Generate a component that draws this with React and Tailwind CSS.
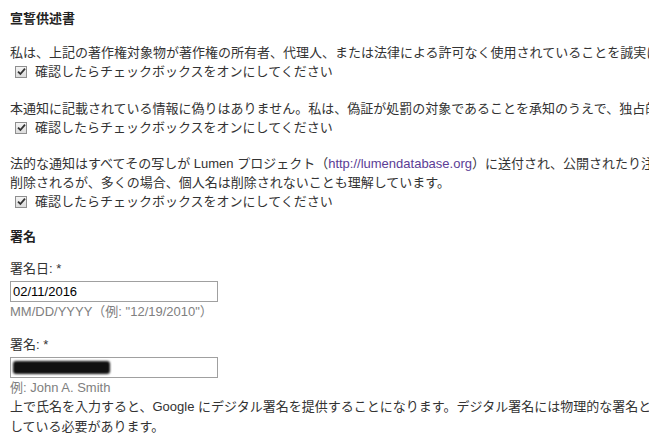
import React from 'react';

const font = { fontFamily: '"Liberation Sans", Arial, "Noto Sans CJK JP", sans-serif' };

const Check = () => (
  <label className="flex items-center h-[19px]">
    <span className="ml-[5px] mr-[8px] w-[12px] h-[12px] border border-[#8f8f8f] bg-gradient-to-b from-[#f4f4f4] to-[#dcdcdc] flex items-center justify-center">
      <svg width="9" height="9" viewBox="0 0 9 9">
        <path d="M1 4.6 L3.4 7 L8 1.6" fill="none" stroke="#333" strokeWidth="1.8" />
      </svg>
    </span>
    <span>確認したらチェックボックスをオンにしてください</span>
  </label>
);

const TextField = ({ children }) => (
  <div className="mt-[3px] w-[208px] h-[21px] border border-[#a0a0a0] bg-white flex items-center px-[2px] text-black">
    {children}
  </div>
);

export default function App() {
  return (
    <div className="w-[649px] h-[445px] overflow-hidden bg-white text-[13px] leading-[19px] text-[#333] whitespace-nowrap" style={font}>
      <div className="pl-[10px] pt-[9px]">
        <h2 className="font-bold text-[#222]">宣誓供述書</h2>

        <div className="mt-[15px]">
          <p>私は、上記の著作権対象物が著作権の所有者、代理人、または法律による許可なく使用されていることを誠実に信じています。</p>
          <Check />
        </div>

        <div className="mt-[18px]">
          <p>本通知に記載されている情報に偽りはありません。私は、偽証が処罰の対象であることを承知のうえで、独占的権利の所有者またはその代理人であることを宣誓します。</p>
          <Check />
        </div>

        <div className="mt-[17px]">
          <p>
            法的な通知はすべてその写しが Lumen プロジェクト（<a className="text-[#5b3d95]">http://lumendatabase.org</a>）に送付され、公開されたり注釈が付けられたりすることがあり、個人の連絡先情報は
            <br />
            削除されるが、多くの場合、個人名は削除されないことも理解しています。
          </p>
          <Check />
        </div>

        <h2 className="mt-[16px] font-bold text-[#222]">署名</h2>

        <div className="mt-[13px]">
          <div>署名日: *</div>
          <TextField>02/11/2016</TextField>
          <div className="text-[#808080]">MM/DD/YYYY（例: "12/19/2010"）</div>
        </div>

        <div className="mt-[14px]">
          <div>署名: *</div>
          <TextField>
            <span className="block w-[97px] h-[13px] bg-[#111] blur-[1.2px] rounded-[3px]" />
          </TextField>
          <div className="text-[#808080]">例: John A. Smith</div>
          <p className="leading-[20px]">
            上で氏名を入力すると、Google にデジタル署名を提供することになります。デジタル署名には物理的な署名と同等の法的効力があります。署名を有効にするには、本通知の送信者と同じ名前を
            <br />
            している必要があります。
          </p>
        </div>
      </div>
    </div>
  );
}
